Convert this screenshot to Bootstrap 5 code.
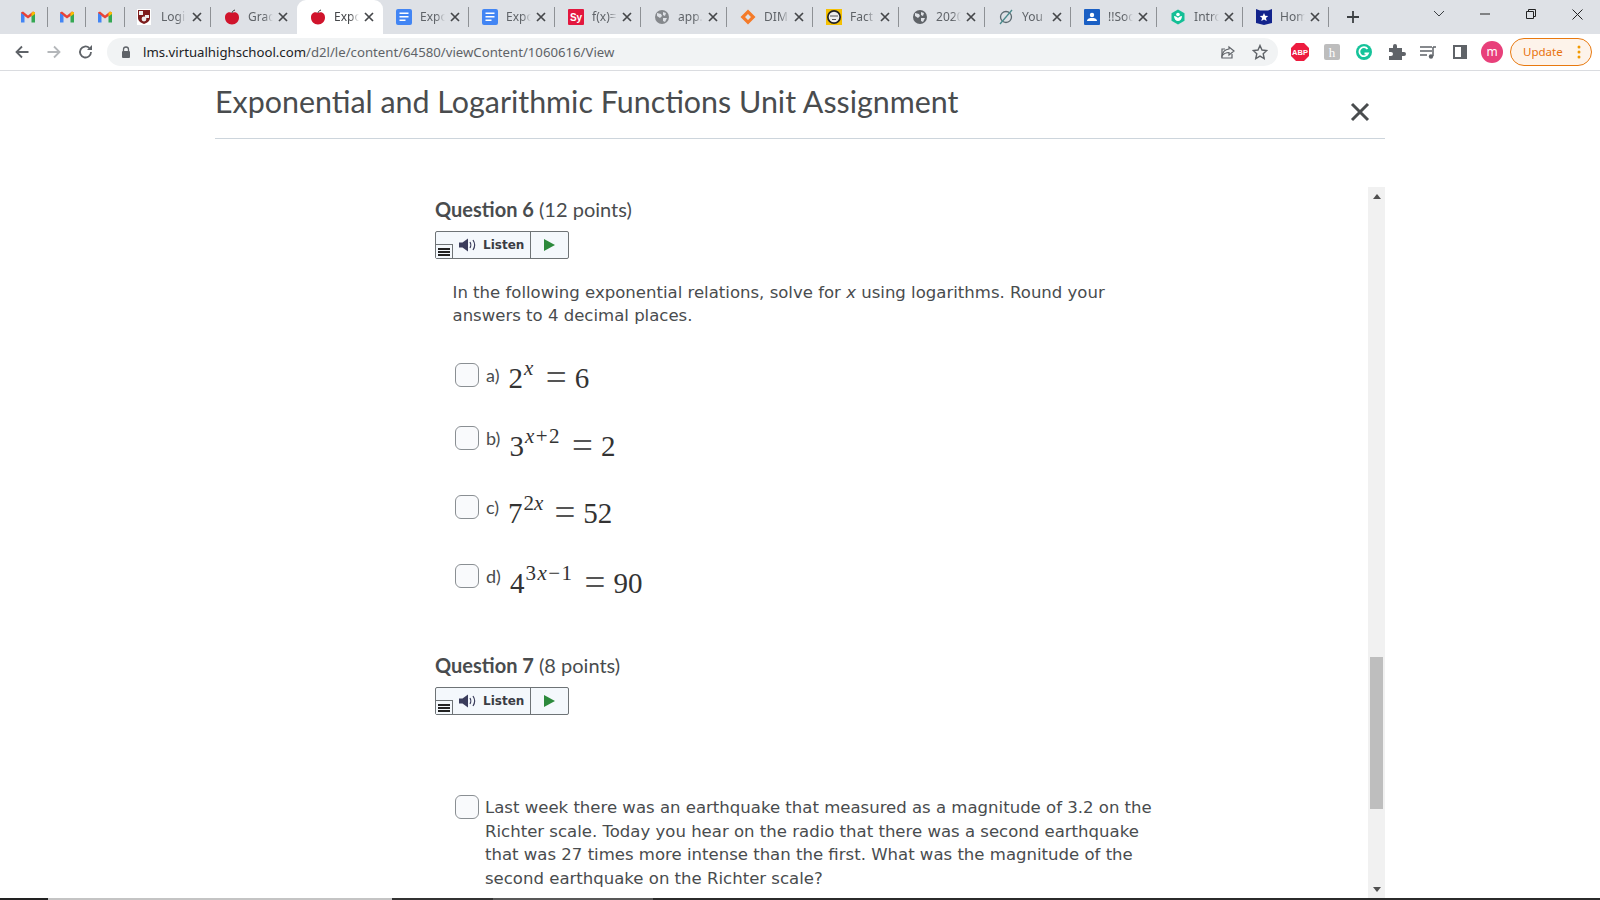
<!DOCTYPE html>
<html lang="en"><head><meta charset="utf-8"><title>Exponential and Logarithmic Functions Unit Assignment</title>
<link href="https://cdn.jsdelivr.net/npm/bootstrap@5.3.0/dist/css/bootstrap.min.css" rel="stylesheet">
<script src="https://cdn.jsdelivr.net/npm/bootstrap@5.3.0/dist/js/bootstrap.bundle.min.js"></script>
<style>
html,body{height:900px;overflow:hidden;background:#fff}
body{font-family:"Noto Sans",sans-serif;color:#494c4e}
.tabstrip{height:34px;background:#dee1e6;padding-left:9px}
.tabcell{height:34px;width:86px;flex:none;padding-left:13px;position:relative;font-size:12px;color:#5f6368}
.tabcell.gm{width:38.7px;padding-left:11px}
.tabcell::after{content:"";width:1px;height:20px;background:#8e9195;position:absolute;right:0;top:7px}
.tabcell.on{background:#fff;border-radius:9px 9px 0 0;color:#45474a}
.tabcell.on::after,.tabcell.nosep::after{display:none}
.tabcell.crest{padding-left:11px}
.tabcell.crest .tabtxt{margin-left:9px}
.tabcell.crest .tabx{margin-left:6px}
.tabico{width:16px;height:16px;flex:none;display:block}
.tabtxt{width:25px;margin-left:8px;overflow:hidden;white-space:nowrap;flex:none;-webkit-mask-image:linear-gradient(90deg,#000 65%,transparent);mask-image:linear-gradient(90deg,#000 65%,transparent)}
.tabx{width:10px;height:10px;margin-left:5px;flex:none}
.newtab{margin-left:17px}
.winctl{margin-left:auto;gap:0}
.winbtn{width:46px;height:28px;margin-bottom:6px}
.toolbar{height:36px;background:#fff;border-bottom:1px solid #dadce0;box-sizing:content-box;padding-left:13px}
.navico{width:18px;height:18px;margin-right:14px;flex:none}
.omni{width:1171px;height:28px;background:#f1f3f4;border-radius:14px;margin-left:-2px;padding-left:14px;padding-right:10px}
.urltxt{font-size:13.2px;color:#5f6368;margin-left:12px;margin-top:1px;white-space:nowrap}
.urltxt b{font-weight:400;color:#202124}
.extico{width:20px;height:20px;flex:none;display:block}
.exts{gap:12px;margin-left:12px}
.avatar{width:22px;height:22px;border-radius:50%;background:#e8407a;color:#fff;font-size:12px;line-height:21px;text-align:center;margin-left:11px;flex:none}
.updpill{width:82px;height:28px;border:1px solid #e8790f;border-radius:14px;background:#fdf3ea;color:#e8710a;font-size:11.5px;margin-left:7px;padding-left:12px;padding-right:10px}
.pagewrap{width:1170px;margin-left:215px}
.dlghead{height:68px;border-bottom:1px solid #cdd5dc;padding-top:8px}
.dlgtitle{font-family:Lato,sans-serif;font-size:30.4px;font-weight:400;color:#494c4e;margin:0;line-height:44px}
.dlgclose{width:22px;height:22px;margin-right:14px;margin-top:19px;background:none;border:0;padding:0}
.scrollarea{height:712px;margin-top:48px;overflow:hidden}
.qcol{width:950px;flex:none;padding-left:220px;padding-top:8px}
.qhead{font-family:Lato,sans-serif;font-size:20px;color:#494c4e;margin:0;line-height:28px;font-weight:400}
.qhead strong{font-weight:700}
.listenbox{width:134px;height:28px;border:1px solid #6e7376;border-radius:2px;background:#f4f8fc;margin-top:8px;position:relative;font-family:"DejaVu Sans",sans-serif;font-size:12px;font-weight:700;color:#3b3d44}
.listenleft{width:95px;height:26px;border-right:1px solid #6e7376;padding-left:23px;gap:5px}
.listenplay{width:37px}
.menuchip{position:absolute;left:0;bottom:0;width:17px;height:14px;background:#f4f8fc;border:1px solid #6e7376;border-left:0;border-bottom:0;padding:3px 2px}
.menuchip i{display:block;height:2px;background:#222;margin-bottom:1px}
.qtext{font-family:"DejaVu Sans",sans-serif;font-size:16.55px;line-height:23.4px;color:#494c4e}
.lead-p{margin:22px 0 0 17.500px;width:680px}
.optrow{padding-left:20px;height:34px}
.fakebox{width:24px;height:24px;flex:none;border:1px solid #8a8f93;border-radius:6px;background:#f9fafc}
.optlabel{font-family:Lato,sans-serif;font-size:18px;margin-left:7px;line-height:24px;color:#494c4e}
.eqn{font-family:"Liberation Serif",serif;font-size:29px;color:#333;margin-left:9px;white-space:nowrap;line-height:34px}
.eqn sup{font-size:21px;top:-.6em;line-height:0;vertical-align:baseline;position:relative;margin-left:1px;letter-spacing:1.500px}
.eqn em{font-size:21px}
.eqn .rel{font-size:37px;line-height:0;margin:0 8px 0 11px;vertical-align:-2px;color:#555}
.r3 .eqn sup{letter-spacing:0}
.r1{margin-top:35px}.r2{margin-top:29px}.r3{margin-top:35px}.r4{margin-top:35px}
.r1 .eqn{margin-top:-2px}.r2 .eqn{margin-top:3px}.r3 .eqn{margin-top:1px}.r4 .eqn{margin-top:2px}
.q7{margin-top:53.500px}
.lastrow{margin-top:80px;padding-left:20px}
.lastrow p{margin:1px 0 0 6px;width:672px;flex:none}
.scrolltrack{width:17px;height:712px;background:#f1f1f1;margin-left:203px;flex:none;padding:0 2px}
.arrowcell{height:18px;flex:none}
.arrowcell.btm{height:20px}
.spacetop{height:452px;flex:none}
.thumb{height:152px;background:#bebebe;flex:none}
.tbar{height:2px;background:#2b2b2b;position:fixed;left:0;right:0;bottom:0}
.seg1{width:48px;background:#222}.seg2{width:344px;background:#c4c4c4}.seg3{width:101px;background:#333}.seg4{width:160px;background:#585858}
</style></head><body>

<div class="tabstrip d-flex align-items-center">
<div class="tabcell gm d-flex align-items-center"><svg class="tabico" viewBox="0 0 16 16"><path d="M1 4.500l7 5 7-5v-1L13 2.500 8 6.500 3 2.500 1 3.500z" fill="#ea4335"/><path d="M1 4v9.500h3.500V6.500z" fill="#4285f4"/><path d="M15 4v9.500h-3.500V6.500z" fill="#34a853"/><path d="M11.500 4L13 2.500l2 1V5l-3.500 2.500z" fill="#fbbc04"/></svg></div>
<div class="tabcell gm d-flex align-items-center"><svg class="tabico" viewBox="0 0 16 16"><path d="M1 4.500l7 5 7-5v-1L13 2.500 8 6.500 3 2.500 1 3.500z" fill="#ea4335"/><path d="M1 4v9.500h3.500V6.500z" fill="#4285f4"/><path d="M15 4v9.500h-3.500V6.500z" fill="#34a853"/><path d="M11.500 4L13 2.500l2 1V5l-3.500 2.500z" fill="#fbbc04"/></svg></div>
<div class="tabcell gm d-flex align-items-center"><svg class="tabico" viewBox="0 0 16 16"><path d="M1 4.500l7 5 7-5v-1L13 2.500 8 6.500 3 2.500 1 3.500z" fill="#ea4335"/><path d="M1 4v9.500h3.500V6.500z" fill="#4285f4"/><path d="M15 4v9.500h-3.500V6.500z" fill="#34a853"/><path d="M11.500 4L13 2.500l2 1V5l-3.500 2.500z" fill="#fbbc04"/></svg></div>
<div class="tabcell crest d-flex align-items-center"><svg class="tabico" viewBox="0 0 16 16"><rect width="14" height="16" x="1" fill="#fff"/><path d="M2 1h12v8c0 3-3 5-6 6-3-1-6-3-6-6z" fill="#7d1d1d"/><path d="M3 2h4v4H3zM9 6h4v3H9z" fill="#eee"/><circle cx="8" cy="10" r="2.400" fill="#eee"/></svg><span class="tabtxt">Logi</span><svg class="tabx" viewBox="0 0 10 10"><path d="M1 1l8 8M9 1L1 9" stroke="#45474a" stroke-width="1.7"/></svg></div>
<div class="tabcell nosep d-flex align-items-center"><svg class="tabico" viewBox="0 0 16 16"><path d="M8 4c2-1.500 7-1 7 4.500 0 4-3 7-7 7s-7-3-7-7C1 3 6 2.500 8 4z" fill="#d0142c"/><path d="M8 4c0-1 1-2.500 3-3" stroke="#333" fill="none"/></svg><span class="tabtxt">Grad</span><svg class="tabx" viewBox="0 0 10 10"><path d="M1 1l8 8M9 1L1 9" stroke="#45474a" stroke-width="1.7"/></svg></div>
<div class="tabcell on nosep d-flex align-items-center"><svg class="tabico" viewBox="0 0 16 16"><path d="M8 4c2-1.500 7-1 7 4.500 0 4-3 7-7 7s-7-3-7-7C1 3 6 2.500 8 4z" fill="#d0142c"/><path d="M8 4c0-1 1-2.500 3-3" stroke="#333" fill="none"/></svg><span class="tabtxt">Expo</span><svg class="tabx" viewBox="0 0 10 10"><path d="M1 1l8 8M9 1L1 9" stroke="#45474a" stroke-width="1.7"/></svg></div>
<div class="tabcell d-flex align-items-center"><svg class="tabico" viewBox="0 0 16 16"><rect width="16" height="16" rx="2" fill="#4285f4"/><path d="M3.500 3.500h9V5h-9zM3.500 7h9v1.500h-9zM3.500 10.500h6V12h-6z" fill="#fff"/></svg><span class="tabtxt">Expo</span><svg class="tabx" viewBox="0 0 10 10"><path d="M1 1l8 8M9 1L1 9" stroke="#45474a" stroke-width="1.7"/></svg></div>
<div class="tabcell d-flex align-items-center"><svg class="tabico" viewBox="0 0 16 16"><rect width="16" height="16" rx="2" fill="#4285f4"/><path d="M3.500 3.500h9V5h-9zM3.500 7h9v1.500h-9zM3.500 10.500h6V12h-6z" fill="#fff"/></svg><span class="tabtxt">Expo</span><svg class="tabx" viewBox="0 0 10 10"><path d="M1 1l8 8M9 1L1 9" stroke="#45474a" stroke-width="1.7"/></svg></div>
<div class="tabcell d-flex align-items-center"><svg class="tabico" viewBox="0 0 16 16"><rect width="16" height="16" rx="1" fill="#e3173e"/><text x="8" y="12" font-size="10" font-weight="700" fill="#fff" text-anchor="middle" font-family="Liberation Sans">Sy</text></svg><span class="tabtxt">f(x)=</span><svg class="tabx" viewBox="0 0 10 10"><path d="M1 1l8 8M9 1L1 9" stroke="#45474a" stroke-width="1.7"/></svg></div>
<div class="tabcell d-flex align-items-center"><svg class="tabico" viewBox="0 0 16 16"><circle cx="8" cy="8" r="7" fill="#85888c"/><path d="M3 4l4 1 1 2-2 2-3-2zM9 3l3 1-1 3-2-1zM9 9l4 0-2 4-2-1z" fill="#dee1e6"/></svg><span class="tabtxt">app.</span><svg class="tabx" viewBox="0 0 10 10"><path d="M1 1l8 8M9 1L1 9" stroke="#45474a" stroke-width="1.7"/></svg></div>
<div class="tabcell d-flex align-items-center"><svg class="tabico" viewBox="0 0 16 16"><path d="M8 .5L15.500 8 8 15.500 .5 8zM8 5L5 8l3 3 3-3z" fill="#f47b2a" fill-rule="evenodd"/></svg><span class="tabtxt">DIM</span><svg class="tabx" viewBox="0 0 10 10"><path d="M1 1l8 8M9 1L1 9" stroke="#45474a" stroke-width="1.7"/></svg></div>
<div class="tabcell d-flex align-items-center"><svg class="tabico" viewBox="0 0 16 16"><rect width="16" height="16" fill="#f5c000"/><circle cx="8" cy="8" r="7" fill="#222"/><circle cx="8" cy="8" r="5.300" fill="#eee"/><path d="M4 7h8M6 10.500h4" stroke="#555"/></svg><span class="tabtxt">Fact</span><svg class="tabx" viewBox="0 0 10 10"><path d="M1 1l8 8M9 1L1 9" stroke="#45474a" stroke-width="1.7"/></svg></div>
<div class="tabcell d-flex align-items-center"><svg class="tabico" viewBox="0 0 16 16"><circle cx="8" cy="8" r="7" fill="#5f6368"/><path d="M3 4l4 1 1 2-2 2-3-2zM9 3l3 1-1 3-2-1zM9 9l4 0-2 4-2-1z" fill="#dee1e6"/></svg><span class="tabtxt">2020</span><svg class="tabx" viewBox="0 0 10 10"><path d="M1 1l8 8M9 1L1 9" stroke="#45474a" stroke-width="1.7"/></svg></div>
<div class="tabcell d-flex align-items-center"><svg class="tabico" viewBox="0 0 16 16"><circle cx="8" cy="8" r="5.500" fill="none" stroke="#5d6a70" stroke-width="1.300"/><path d="M2 15L14 1" stroke="#4a8a8c" stroke-width="1.300"/></svg><span class="tabtxt">You</span><svg class="tabx" viewBox="0 0 10 10"><path d="M1 1l8 8M9 1L1 9" stroke="#45474a" stroke-width="1.7"/></svg></div>
<div class="tabcell d-flex align-items-center"><svg class="tabico" viewBox="0 0 16 16"><rect width="16" height="16" rx="1" fill="#1a5fc4"/><circle cx="8" cy="6" r="2.200" fill="#fff"/><path d="M3 12c0-2.500 3-3 5-3s5 .5 5 3z" fill="#fff"/></svg><span class="tabtxt">!!Soc</span><svg class="tabx" viewBox="0 0 10 10"><path d="M1 1l8 8M9 1L1 9" stroke="#45474a" stroke-width="1.7"/></svg></div>
<div class="tabcell d-flex align-items-center"><svg class="tabico" viewBox="0 0 16 16"><path d="M8 .5l6.500 3.700v7.600L8 15.500 1.500 11.800V4.200z" fill="#14bf96"/><circle cx="8" cy="5.500" r="1.800" fill="#fff"/><path d="M4 7c0 3 2 5 4 5s4-2 4-5c-2 0-3 1-4 2-1-1-2-2-4-2z" fill="#fff"/></svg><span class="tabtxt">Intro</span><svg class="tabx" viewBox="0 0 10 10"><path d="M1 1l8 8M9 1L1 9" stroke="#45474a" stroke-width="1.7"/></svg></div>
<div class="tabcell d-flex align-items-center"><svg class="tabico" viewBox="0 0 16 16"><path d="M0 0l4 1.500h8L16 0v14l-8 2-8-2z" fill="#12238c"/><path d="M8 4l1.200 2.800 3 .2-2.300 2 .8 3L8 10.400 5.300 12l.8-3-2.300-2 3-.2z" fill="#fff"/></svg><span class="tabtxt">Hom</span><svg class="tabx" viewBox="0 0 10 10"><path d="M1 1l8 8M9 1L1 9" stroke="#45474a" stroke-width="1.7"/></svg></div>
<svg class="newtab" width="14" height="14" viewBox="0 0 14 14"><path d="M7 1v12M1 7h12" stroke="#3c4043" stroke-width="1.800"/></svg>
<div class="winctl d-flex">
<div class="winbtn d-flex align-items-center justify-content-center"><svg width="12" height="8" viewBox="0 0 12 8"><path d="M1 1l5 5 5-5" fill="none" stroke="#3c4043"/></svg></div>
<div class="winbtn d-flex align-items-center justify-content-center"><svg width="10" height="2" viewBox="0 0 10 2"><path d="M0 1h10" stroke="#222"/></svg></div>
<div class="winbtn d-flex align-items-center justify-content-center"><svg width="10" height="10" viewBox="0 0 10 10"><path d="M.5 2.500h7v7h-7zM2.500 2.500v-2h7v7h-2" fill="none" stroke="#222"/></svg></div>
<div class="winbtn d-flex align-items-center justify-content-center"><svg width="11" height="11" viewBox="0 0 11 11"><path d="M.5.5l10 10M10.500.5l-10 10" stroke="#222"/></svg></div>
</div>
</div>

<div class="toolbar d-flex align-items-center">
<svg class="navico" viewBox="0 0 18 18"><path d="M15.500 9H3.500M9 3.500L3.500 9 9 14.500" fill="none" stroke="#5f6368" stroke-width="1.800"/></svg>
<svg class="navico" viewBox="0 0 18 18"><path d="M2.500 9h12M9 3.500L14.500 9 9 14.500" fill="none" stroke="#b4b7ba" stroke-width="1.800"/></svg>
<svg class="navico" viewBox="0 0 18 18"><path d="M14 9a5.500 5.500 0 1 1-1.700-4" fill="none" stroke="#5f6368" stroke-width="1.800"/><path d="M15 2v5h-5z" fill="#5f6368"/></svg>
<div class="omni d-flex align-items-center">
<svg width="10" height="12" viewBox="0 0 10 12"><path d="M2.500 5V3.500a2.500 2.500 0 0 1 5 0V5" fill="none" stroke="#5f6368" stroke-width="1.300"/><rect x="1" y="5" width="8" height="7" rx="1" fill="#5f6368"/></svg>
<span class="urltxt"><b>lms.virtualhighschool.com</b>/d2l/le/content/64580/viewContent/1060616/View</span>
<svg class="ms-auto" width="16" height="16" viewBox="0 0 16 16"><path d="M9 3l5 4-5 4V8.500C5.500 8.500 3.500 10 2 12c.5-4 3-6.500 7-7z" fill="none" stroke="#5f6368" stroke-width="1.200"/><path d="M12 10v4H2V5h3" fill="none" stroke="#5f6368" stroke-width="1.200"/></svg>
<svg class="ms-3" width="16" height="16" viewBox="0 0 16 16"><path d="M8 1.500l2 4.500 4.800.5-3.600 3.200 1 4.800L8 12.100l-4.200 2.400 1-4.800L1.200 6.500 6 6z" fill="none" stroke="#5f6368" stroke-width="1.400"/></svg>
</div>
<div class="exts d-flex align-items-center">
<svg class="extico" viewBox="0 0 20 20"><path d="M6 1h8l5 5v8l-5 5H6l-5-5V6z" fill="#ed1c3f"/><text x="10" y="13" font-size="7.500" font-weight="700" fill="#fff" text-anchor="middle" font-family="Liberation Sans">ABP</text></svg>
<svg class="extico" viewBox="0 0 20 20"><rect x="2" y="2" width="16" height="16" rx="2" fill="#bdbdbd"/><text x="10" y="15" font-size="13" fill="#fff" text-anchor="middle" font-family="Liberation Serif">h</text></svg>
<svg class="extico" viewBox="0 0 20 20"><circle cx="10" cy="10" r="8" fill="#15c39a"/><path d="M13.500 7A4.500 4.500 0 1 0 14 11.500H10.500" fill="none" stroke="#fff" stroke-width="1.800"/></svg>
<svg class="extico" viewBox="0 0 20 20"><path d="M3 6h4V4a2 2 0 0 1 4 0v2h5v4h2a2 2 0 0 1 0 4h-2v4H3v-4h2a2 2 0 0 0 0-4H3z" fill="#5f6368"/></svg>
<svg class="extico" viewBox="0 0 20 20"><path d="M2 5h12M2 9h12M2 13h7" stroke="#5f6368" stroke-width="1.500"/><path d="M15 5h3M15 5v9" stroke="#5f6368" stroke-width="1.500"/><circle cx="13" cy="14.500" r="2.200" fill="#5f6368"/></svg>
<svg class="extico" viewBox="0 0 20 20"><rect x="3" y="3" width="14" height="14" fill="#5f6368"/><rect x="5" y="5" width="6" height="10" fill="#fff"/></svg>
</div>
<div class="avatar">m</div>
<div class="updpill d-flex align-items-center justify-content-between"><span>Update</span><svg width="4" height="14" viewBox="0 0 4 14"><circle cx="2" cy="2" r="1.500" fill="#f29900"/><circle cx="2" cy="7" r="1.500" fill="#f29900"/><circle cx="2" cy="12" r="1.500" fill="#f29900"/></svg></div>
</div>

<div class="pagewrap">
<div class="dlghead d-flex justify-content-between align-items-start">
<h1 class="dlgtitle">Exponential and Logarithmic Functions Unit Assignment</h1>
<button class="dlgclose" type="button" aria-label="Close"><svg width="20" height="20" viewBox="0 0 20 20"><path d="M2 2l16 16M18 2L2 18" stroke="#494c4e" stroke-width="3"/></svg></button>
</div>
<div class="scrollarea d-flex">
<div class="qcol">
<h2 class="qhead"><strong>Question 6</strong> (12 points)</h2>
<div class="listenbox d-flex align-items-center">
<div class="listenleft d-flex align-items-center"><svg width="19" height="14" viewBox="0 0 19 14"><path d="M0 4.500h3.500L9 .5v13L3.500 9.500H0z" fill="#3b3d5c"/><path d="M11 4c1 1.500 1 4.500 0 6M14 2c2 3 2 7 0 10" fill="none" stroke="#3b3d5c" stroke-width="1.200"/></svg><span>Listen</span></div>
<div class="listenplay d-flex align-items-center justify-content-center"><svg width="11" height="12" viewBox="0 0 11 12"><path d="M0 0l11 6-11 6z" fill="#2c8a3c"/></svg></div>
<div class="menuchip"><i></i><i></i><i></i></div>
</div>
<p class="qtext lead-p">In the following exponential relations, solve for <em>x</em> using logarithms. Round your answers to 4 decimal places.</p>
<div class="optrow r1 d-flex align-items-start"><span class="fakebox"></span><span class="optlabel">a)</span><span class="eqn">2<sup><em>x</em></sup><span class="rel">=</span>6</span></div>
<div class="optrow r2 d-flex align-items-start"><span class="fakebox"></span><span class="optlabel">b)</span><span class="eqn">3<sup><em>x</em>+2</sup><span class="rel">=</span>2</span></div>
<div class="optrow r3 d-flex align-items-start"><span class="fakebox"></span><span class="optlabel">c)</span><span class="eqn">7<sup>2<em>x</em></sup><span class="rel">=</span>52</span></div>
<div class="optrow r4 d-flex align-items-start"><span class="fakebox"></span><span class="optlabel">d)</span><span class="eqn">4<sup>3<em>x</em>−1</sup><span class="rel">=</span>90</span></div>
<h2 class="qhead q7"><strong>Question 7</strong> (8 points)</h2>
<div class="listenbox d-flex align-items-center">
<div class="listenleft d-flex align-items-center"><svg width="19" height="14" viewBox="0 0 19 14"><path d="M0 4.500h3.500L9 .5v13L3.500 9.500H0z" fill="#3b3d5c"/><path d="M11 4c1 1.500 1 4.500 0 6M14 2c2 3 2 7 0 10" fill="none" stroke="#3b3d5c" stroke-width="1.200"/></svg><span>Listen</span></div>
<div class="listenplay d-flex align-items-center justify-content-center"><svg width="11" height="12" viewBox="0 0 11 12"><path d="M0 0l11 6-11 6z" fill="#2c8a3c"/></svg></div>
<div class="menuchip"><i></i><i></i><i></i></div>
</div>
<div class="lastrow d-flex align-items-start"><span class="fakebox"></span><p class="qtext">Last week there was an earthquake that measured as a magnitude of 3.2 on the Richter scale. Today you hear on the radio that there was a second earthquake that was 27 times more intense than the first. What was the magnitude of the second earthquake on the Richter scale?</p></div>
</div>
<div class="scrolltrack d-flex flex-column">
<div class="arrowcell d-flex align-items-center justify-content-center"><svg width="8" height="5" viewBox="0 0 8 5"><path d="M4 0l4 5H0z" fill="#505050"/></svg></div>
<div class="spacetop"></div>
<div class="thumb"></div>
<div class="arrowcell btm mt-auto d-flex align-items-center justify-content-center"><svg width="8" height="5" viewBox="0 0 8 5"><path d="M0 0h8L4 5z" fill="#505050"/></svg></div>
</div>
</div>
</div>
<div class="tbar d-flex"><div class="seg1"></div><div class="seg2"></div><div class="seg3"></div><div class="seg4"></div></div>
</body></html>
